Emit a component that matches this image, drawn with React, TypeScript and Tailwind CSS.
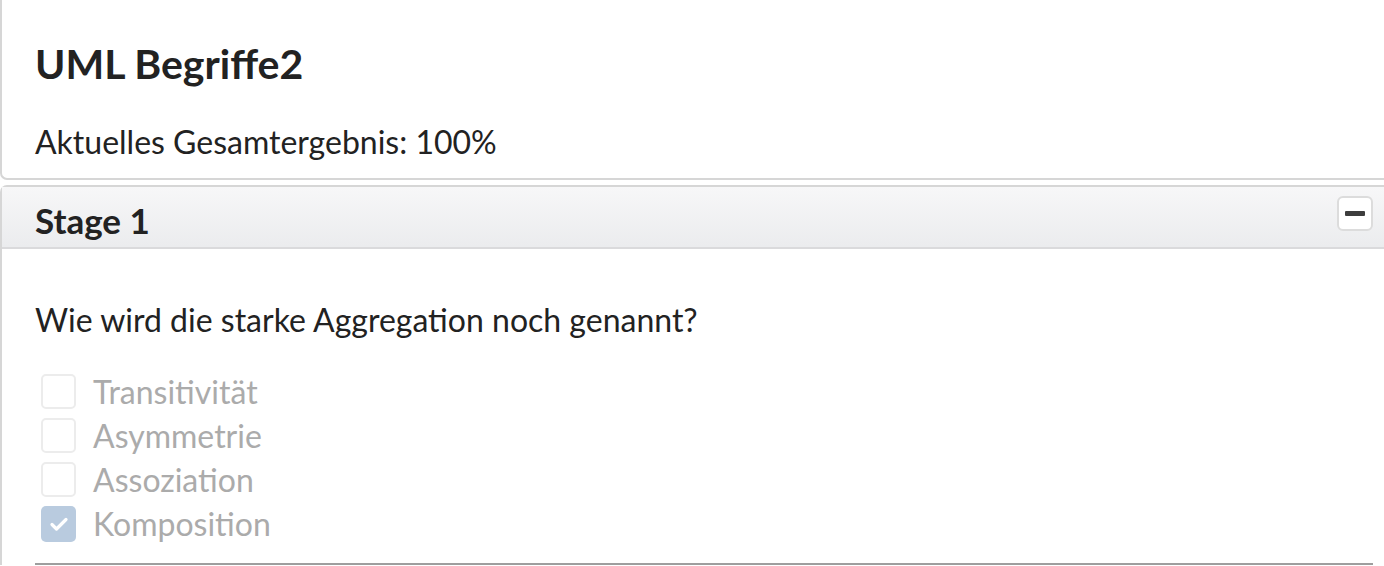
import React from 'react';

const options = [
  { label: 'Transitivität', checked: false },
  { label: 'Asymmetrie', checked: false },
  { label: 'Assoziation', checked: false },
  { label: 'Komposition', checked: true },
];

const Checkbox: React.FC<{ checked: boolean }> = ({ checked }) =>
  checked ? (
    <span className="flex h-[36px] w-[35px] shrink-0 items-center justify-center rounded-[5px] bg-[#b9cbdf]">
      <svg width="20" height="16" viewBox="0 0 20 16" fill="none">
        <path d="M3 8.5l4.5 4.5L17 3.5" stroke="white" strokeWidth="3.2" strokeLinecap="round" strokeLinejoin="round" />
      </svg>
    </span>
  ) : (
    <span className="block h-[35px] w-[35px] shrink-0 rounded-[5px] border-2 border-[#ececec] bg-white" />
  );

const App: React.FC = () => {
  return (
    <div className="min-h-[566px] bg-white font-['Lato','Liberation_Sans',sans-serif] text-[#222] overflow-hidden">
      {/* summary card */}
      <div className="rounded-bl-[7px] border-b-2 border-l-2 border-[#d6d6d6] pl-[33px] pt-[39px] pb-[16px]">
        <h1 className="text-[41px] font-bold leading-[1.2]">UML Begriffe2</h1>
        <p className="mt-[35px] text-[32px] leading-[1.2]">Aktuelles Gesamtergebnis: 100%</p>
      </div>

      {/* stage panel */}
      <div className="mt-[5px] rounded-tl-[7px] border-l-2 border-t-2 border-[#d6d6d6]">
        <div className="flex items-start justify-between border-b-2 border-[#dadadc] bg-gradient-to-b from-[#f7f7f8] to-[#ebecee] pl-[33px] pr-[11px] pt-[9px] pb-[6px]">
          <h2 className="pt-[3px] text-[35px] font-bold leading-[1.2]">Stage 1</h2>
          <button className="flex h-[35px] w-[36px] items-center justify-center rounded-[6px] border-2 border-[#dcdcdc] bg-white">
            <span className="block h-[5px] w-[20px] rounded-[1px] bg-[#3d3d3d]" />
          </button>
        </div>

        <div className="pl-[33px] pr-[11px] pt-[52px]">
          <p className="text-[32px] leading-[1.2]">Wie wird die starke Aggregation noch genannt?</p>
          <div className="mt-[31px] pl-[6px]">
            {options.map((o) => (
              <label key={o.label} className="flex h-[44px] items-center gap-[17px]">
                <Checkbox checked={o.checked} />
                <span className="text-[32px] leading-[44px] text-[#ababab]">{o.label}</span>
              </label>
            ))}
          </div>
          <div className="mt-[17px] border-t-2 border-[#9e9e9e]" />
        </div>
      </div>
    </div>
  );
};

export default App;
